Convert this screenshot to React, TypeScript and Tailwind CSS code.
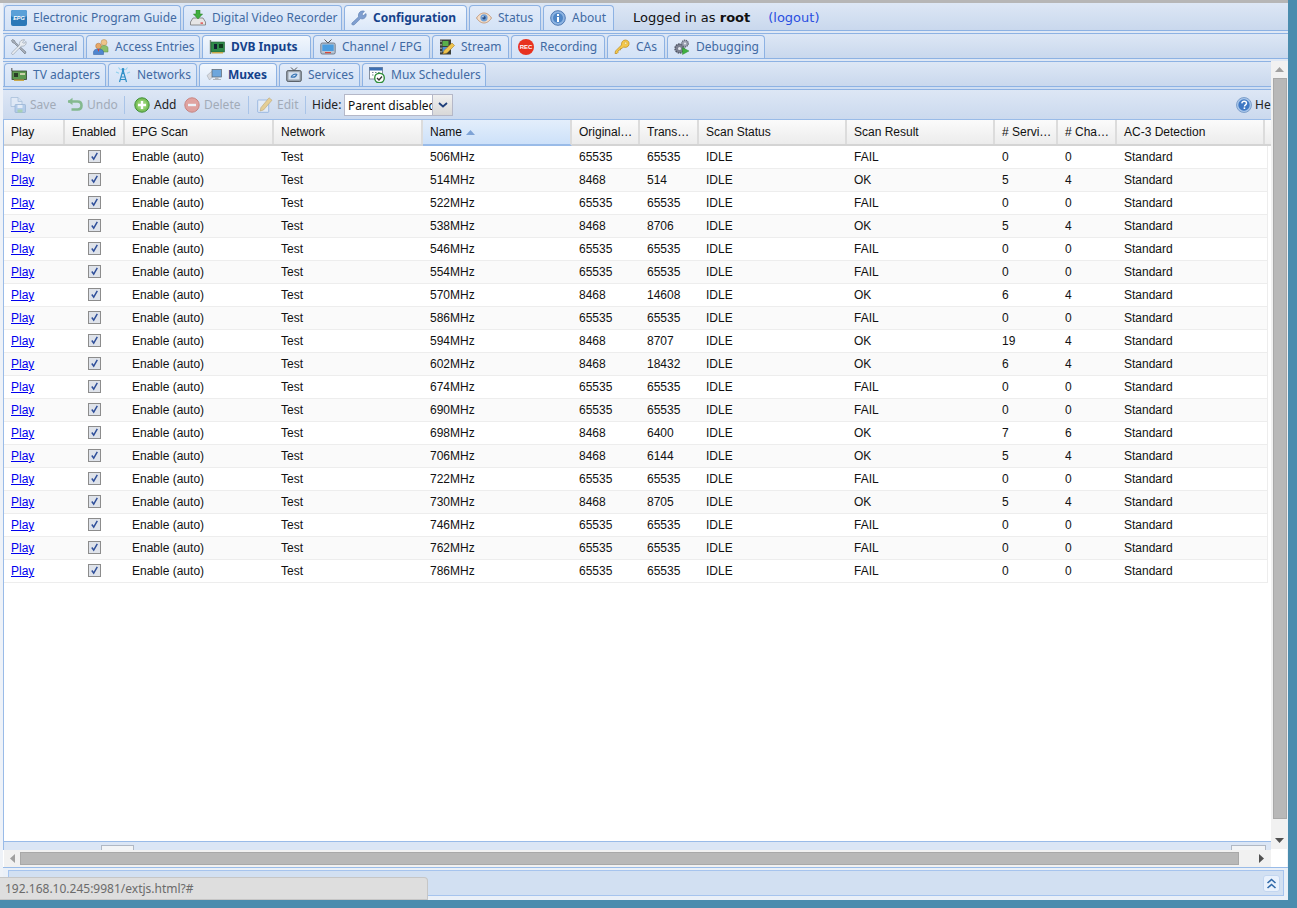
import React from "react";

const ui = "font-['Noto_Sans','DejaVu_Sans',sans-serif]";
const cellFont = "font-['Liberation_Sans',Arial,sans-serif]";

type P = { className?: string };
const S = ({ children, className }: { children: React.ReactNode; className?: string }) => (
  <svg viewBox="0 0 16 16" width="16" height="16" className={"shrink-0 " + (className || "")}>{children}</svg>
);

const IconEpg = () => (
  <S>
    <rect x="0" y="0" width="16" height="16" rx="2" fill="#2a78b8" />
    <rect x="0" y="0" width="16" height="7" rx="2" fill="#5aa0d8" />
    <text x="8" y="9.5" fontSize="5.5" fontWeight="700" fontStyle="italic" fill="#fff" textAnchor="middle" fontFamily="Liberation Sans">EPG</text>
  </S>
);
const IconDvr = () => (
  <S>
    <path d="M3 8h10l2.5 4v3H.5v-3z" fill="#e6e6e6" stroke="#777" strokeWidth=".8" />
    <rect x="10.5" y="12.5" width="2.5" height="1.2" fill="#d33" />
    <path d="M6 0h4v4h2.6L8 9 3.4 4H6z" fill="#3fae3f" stroke="#2a7d2a" strokeWidth=".5" />
  </S>
);
const IconWrench = () => (
  <S>
    <path d="M2 15c-1 0-1.6-1-1-2l6.6-6.2C7 4.500 8 1.500 11 1c1-.2 2 0 2.400.3L11 4l1.200 1.700L15 3.500c.6 2-.2 4-2 5-1.200.6-2.400.5-3.400.1L3.500 14.500c-.4.400-1 .5-1.500.5z" fill="#7f9fd0" stroke="#5c7db0" strokeWidth=".6" />
  </S>
);
const IconEye = () => (
  <S>
    <path d="M.5 8C3 4 6 3 8 3s5 1 7.500 5C13 12 10 13 8 13S3 12 .5 8z" fill="#f3ddc8" stroke="#b98a68" strokeWidth=".8" />
    <circle cx="8" cy="7.800" r="3.600" fill="#6f9fd6" />
    <circle cx="8" cy="7.800" r="1.700" fill="#2b4f85" />
    <circle cx="7" cy="6.800" r=".7" fill="#fff" />
  </S>
);
const IconInfo = () => (
  <S>
    <circle cx="8" cy="8" r="7.300" fill="#8db4e2" stroke="#4f79b3" />
    <circle cx="8" cy="8" r="5" fill="#4f86c6" />
    <rect x="7" y="7" width="2" height="5" fill="#fff" />
    <rect x="7" y="4" width="2" height="2" fill="#fff" />
  </S>
);
const IconGeneral = () => (
  <S>
    <path d="M14 15 3.500 4.500 1.500 3.500.5 1.500 1.500.5l2 1 1 2L15 13z" fill="#a8b0bb" stroke="#666f7a" strokeWidth=".6" />
    <path d="M1.500 15.500c-.8-.3-1.200-1-.8-1.800L8.500 6C8 4 9 1.200 12 .8c.8-.1 1.300 0 1.700.2L11.500 3l1.300 1.500 2.200-2c.4 1.500.1 3-1.300 4-1.100.8-2.300.8-3.200.5l-7.800 8c-.3.400-.4.600-1 .5z" fill="#e8ecf1" stroke="#8995a3" strokeWidth=".6" />
  </S>
);
const IconUsers = () => (
  <S>
    <circle cx="11" cy="3.500" r="3" fill="#eec48a" stroke="#b48a50" strokeWidth=".5" />
    <path d="M7 13V9c0-1.500 1.500-2.500 4-2.500s4 1 4 2.500v4z" fill="#8cc06b" stroke="#5e8f42" strokeWidth=".5" />
    <circle cx="5.500" cy="7" r="2.800" fill="#e8a867" stroke="#a8703a" strokeWidth=".5" />
    <path d="M.5 15.500V13c0-1.800 2-3 5-3s5 1.200 5 3v2.500z" fill="#4f86d0" stroke="#2f5a98" strokeWidth=".5" />
    <path d="M4.500 10h2l-1 3z" fill="#e03c2c" />
  </S>
);
const IconCard = ({ className }: P) => (
  <S className={className}>
    <path d="M1.500 1v14" stroke="#7a8a7a" strokeWidth="1.400" />
    <rect x="2" y="3" width="13.500" height="10" fill="#2e8a4a" stroke="#1e5c30" strokeWidth=".6" />
    <rect x="5" y="5" width="3" height="5" fill="#123" />
    <rect x="10" y="5" width="4" height="4" fill="#0e3a1e" />
    <path d="M3 13h11v1.500H3z" fill="#c9a94a" />
  </S>
);
const IconTv = () => (
  <S>
    <path d="M4.500.5 8 4l3.500-3.500" stroke="#555" strokeWidth="1" fill="none" />
    <rect x=".8" y="4" width="14.400" height="11" rx="1.500" fill="#b8c4d2" stroke="#5a6a7c" strokeWidth=".8" />
    <rect x="2.300" y="5.500" width="11.400" height="6.500" fill="#4a9de0" />
    <rect x="5" y="13" width="6" height="1.200" fill="#d9483a" />
  </S>
);
const IconStream = () => (
  <S>
    <rect x="1" y="0.500" width="11" height="15" fill="#3b3f3a" />
    <rect x="3.500" y="2" width="6" height="5" fill="#59b04a" />
    <rect x="3.500" y="8" width="6" height="5" fill="#4a90d8" />
    <path d="M1.500 1.500h1v1.500h-1zM1.500 5h1v1.500h-1zM1.500 8.500h1V10h-1zM1.500 12h1v1.500h-1z" fill="#ddd" />
    <path d="M4 15l1-3.500L13 4l2.500 2.500L8 14z" fill="#eec34d" stroke="#a7802a" strokeWidth=".6" />
  </S>
);
const IconRec = () => (
  <S>
    <circle cx="8" cy="8" r="8" fill="#e8321f" />
    <text x="8" y="10" fontSize="6" fontWeight="700" fill="#fff" textAnchor="middle" fontFamily="Liberation Sans">REC</text>
  </S>
);
const IconKey = () => (
  <S>
    <path d="M1 14.500 1.500 12 7.500 6C7 3.500 9 .8 11.500 1s4 2 3.500 4.500-3.300 3.500-5.500 2.500l-1.500 1.500H6.500V11H5l-1 1v1.500l-1 1z" fill="#f5c84a" stroke="#b98a20" strokeWidth=".7" />
    <circle cx="11.700" cy="4.200" r="1.200" fill="#fff1b8" stroke="#b98a20" strokeWidth=".4" />
  </S>
);
const IconGears = () => (
  <S>
    <circle cx="5.500" cy="9.500" r="4.500" fill="#7b8090" stroke="#4f5463" strokeWidth="1.400" strokeDasharray="1.600 .8" />
    <circle cx="5.500" cy="9.500" r="1.500" fill="#e3e6ee" />
    <circle cx="11" cy="4.500" r="3.300" fill="#9da2b2" stroke="#5f6475" strokeWidth="1.200" strokeDasharray="1.300 .7" />
    <circle cx="11" cy="4.500" r="1.100" fill="#e3e6ee" />
    <path d="M8.500 8.500v7l6.500-3.500z" fill="#3fb13f" stroke="#247a24" strokeWidth=".4" />
  </S>
);
const IconAdapter = () => (
  <S>
    <path d="M.8 1v3" stroke="#666" strokeWidth="1.200" />
    <rect x="1" y="4" width="14.500" height="8.500" fill="#5c9a50" stroke="#33452f" strokeWidth=".8" />
    <rect x="3" y="6" width="4" height="4" fill="#2a3d28" />
    <rect x="9" y="6" width="5" height="2" fill="#c9d2a8" />
    <path d="M3 12.500h10V14H3z" fill="#c9a94a" />
  </S>
);
const IconTower = () => (
  <S>
    <path d="M8 3 4.500 15M8 3l3.500 12M6 10h4M5.300 12.500h5.400M7 6.500h2" stroke="#2f8fc7" strokeWidth="1.200" fill="none" />
    <circle cx="8" cy="2.500" r="1.400" fill="#2f8fc7" />
    <path d="M3.500.5 5.500 3M12.500.5 10.500 3M1 5l3 1.200M15 5l-3 1.200" stroke="#8fd0ee" strokeWidth="1.100" />
  </S>
);
const IconMux = () => (
  <S>
    <path d="M1 8.500 5.500 4.500 8 8.500 3.500 13z" fill="#d8dadf" stroke="#9ba0a8" strokeWidth=".5" />
    <rect x="6" y="2.500" width="9.500" height="7.500" fill="#6ea6dc" stroke="#5c6670" strokeWidth=".7" />
    <path d="M9 10h3.500v2H15v1H7v-1h2z" fill="#b0b5bc" />
  </S>
);
const IconServices = () => (
  <S>
    <path d="M5 .5 8 3.500 11 .5" stroke="#444" strokeWidth=".9" fill="none" />
    <rect x=".7" y="3.500" width="14.600" height="11" rx="1.500" fill="#9aa3ac" stroke="#444a50" strokeWidth=".8" />
    <rect x="2.500" y="5.200" width="11" height="7.300" fill="#d6e2f0" />
    <path d="M5 10.500c1-3 4-4 6-3M11 7c-1 3-3.500 3.500-5.500 3" stroke="#3b77b5" strokeWidth="1.200" fill="none" />
  </S>
);
const IconCal = () => (
  <S>
    <rect x=".5" y=".5" width="13" height="11.500" fill="#fff" stroke="#6b7888" strokeWidth=".8" />
    <rect x=".5" y=".5" width="13" height="3" fill="#3d6fb3" />
    <path d="M3 5.500h1.500M6 5.500h1.500M9 5.500h1.500M3 8h1.500M6 8h1.500" stroke="#7a8694" strokeWidth="1.200" />
    <circle cx="10.500" cy="11" r="4.800" fill="#fff" stroke="#2f8f3a" strokeWidth="1.400" />
    <path d="M8 11l2 2 3-3.500" stroke="#333" strokeWidth="1.300" fill="none" />
  </S>
);
const IconSave = () => (
  <S className="opacity-60">
    <path d="M1 .5h7l4 4v5H1z" fill="#e6eef8" stroke="#8aa8cc" strokeWidth=".8" />
    <path d="M8 .5v4h4" fill="#cfdff2" stroke="#8aa8cc" strokeWidth=".8" />
    <rect x="5" y="7.500" width="10.500" height="8" rx=".8" fill="#9fc0e6" stroke="#6f93bf" strokeWidth=".7" />
    <rect x="7.500" y="8" width="5" height="3" fill="#eef4fb" />
    <rect x="7.500" y="12.500" width="5" height="3" fill="#8ec78e" />
  </S>
);
const IconUndo = () => (
  <S className="opacity-60">
    <path d="M1 4.500h9.500c2.500 0 4 1.500 4 4s-1.500 4-4 4H4.500" stroke="#4fa04f" strokeWidth="2.600" fill="none" />
    <path d="M5.500.8V8L.8 4.500z" fill="#4fa04f" />
  </S>
);
const IconAdd = () => (
  <S>
    <circle cx="8" cy="8" r="7.200" fill="#7cc05a" stroke="#3f8f35" />
    <circle cx="8" cy="8" r="5" fill="#92d072" />
    <path d="M6.800 4h2.400v2.800H12v2.400H9.200V12H6.800V9.200H4V6.800h2.800z" fill="#fff" />
  </S>
);
const IconDel = () => (
  <S className="opacity-60">
    <circle cx="8" cy="8" r="7.200" fill="#e87a6a" stroke="#c04a3a" />
    <rect x="4" y="6.800" width="8" height="2.400" fill="#fff" />
  </S>
);
const IconEdit = () => (
  <S className="opacity-60">
    <rect x=".7" y="3" width="11" height="12.300" rx=".6" fill="#eef4fb" stroke="#5f8fd0" strokeWidth=".8" />
    <path d="M3 14l1-3.500L12 .8l3 2.400L6.500 13z" fill="#f0c45a" stroke="#a9812c" strokeWidth=".6" />
  </S>
);
const IconHelp = () => (
  <S>
    <circle cx="8" cy="8" r="7.500" fill="#a9c7ea" stroke="#6f93c3" strokeWidth=".8" />
    <circle cx="8" cy="8" r="5.700" fill="#3f78c4" />
    <path d="M5.800 6.300C6 4.800 7 4.200 8.200 4.200c1.400 0 2.300.8 2.300 2 0 1.700-2 1.700-2 3.300" stroke="#fff" strokeWidth="1.400" fill="none" />
    <rect x="7.600" y="10.400" width="1.600" height="1.600" fill="#fff" />
  </S>
);
const Check = () => (
  <div className="w-[13px] h-[13px] border border-[#8c8c8c] bg-[#dfe3ea] flex items-center justify-center">
    <svg viewBox="0 0 11 11" width="11" height="11">
      <path d="M2.800 5.500l1.900 2.600L8.300 1.800" stroke="#2f4f9a" strokeWidth="1.500" fill="none" />
    </svg>
  </div>
);

const Tab = ({ icon, label, w, active }: { icon: React.ReactNode; label: string; w: string; active?: boolean }) => (
  <div
    className={
      `${w} shrink-0 h-full flex items-center gap-[6px] pl-[6px] rounded-t-[4px] border border-[#8db2e3] ${ui} text-[12px] whitespace-nowrap ` +
      (active
        ? "border-b-0 -mb-px pb-px bg-linear-to-b from-[#f2f7fd] to-[#dbe8f9] font-bold text-[#15428b]"
        : "border-b-0 bg-linear-to-b from-[#e2ebf9] to-[#d3e2f6] text-[#416aa3]")
    }
  >
    {icon}
    <span>{label}</span>
  </div>
);

const Strip = ({ children, pt, h }: { children: React.ReactNode; pt: string; h: string }) => (
  <div className={`${h} ${pt} pl-[1px] flex gap-[2px] border-b border-[#8db2e3] bg-linear-to-b from-[#dde7f5] to-[#c9d8ed] items-stretch`}>
    {children}
  </div>
);

const cols = [
  ["Play", ""],
  ["Enabled", ""],
  ["EPG Scan", ""],
  ["Network", ""],
  ["Name", "sort"],
  ["Original…", ""],
  ["Trans…", ""],
  ["Scan Status", ""],
  ["Scan Result", ""],
  ["# Servi…", ""],
  ["# Cha…", ""],
  ["AC-3 Detection", ""],
];

const rows: [string, string, string, string, string, string][] = [
  ["506MHz", "65535", "65535", "FAIL", "0", "0"],
  ["514MHz", "8468", "514", "OK", "5", "4"],
  ["522MHz", "65535", "65535", "FAIL", "0", "0"],
  ["538MHz", "8468", "8706", "OK", "5", "4"],
  ["546MHz", "65535", "65535", "FAIL", "0", "0"],
  ["554MHz", "65535", "65535", "FAIL", "0", "0"],
  ["570MHz", "8468", "14608", "OK", "6", "4"],
  ["586MHz", "65535", "65535", "FAIL", "0", "0"],
  ["594MHz", "8468", "8707", "OK", "19", "4"],
  ["602MHz", "8468", "18432", "OK", "6", "4"],
  ["674MHz", "65535", "65535", "FAIL", "0", "0"],
  ["690MHz", "65535", "65535", "FAIL", "0", "0"],
  ["698MHz", "8468", "6400", "OK", "7", "6"],
  ["706MHz", "8468", "6144", "OK", "5", "4"],
  ["722MHz", "65535", "65535", "FAIL", "0", "0"],
  ["730MHz", "8468", "8705", "OK", "5", "4"],
  ["746MHz", "65535", "65535", "FAIL", "0", "0"],
  ["762MHz", "65535", "65535", "FAIL", "0", "0"],
  ["786MHz", "65535", "65535", "FAIL", "0", "0"],
];

const gridCols = "grid grid-cols-[61px_60px_149px_149px_149px_68px_59px_148px_148px_63px_59px_148px]";

const Sep = () => <div className="w-px h-[18px] bg-[#a9c4e8] shrink-0" />;
const TbBtn = ({ icon, label, disabled, w }: { icon: React.ReactNode; label: string; disabled?: boolean; w: string }) => (
  <div className={`${w} shrink-0 flex items-center gap-[4px] ${ui} text-[12px] ${disabled ? "text-[#a2abb8]" : "text-[#222]"}`}>
    {icon}
    <span>{label}</span>
  </div>
);

export default function App() {
  return (
    <div className="w-[1297px] h-[908px] bg-[#4a8cae] overflow-hidden relative">
      <div className="w-[1288px] h-[900px] bg-[#eef2f8] border-t-[3px] border-[#b6b6b6] pl-[3px] flex flex-col">
        {/* top level tabs */}
        <Strip h="h-[28px]" pt="pt-[2px]">
          <Tab w="w-[177px]" icon={<IconEpg />} label="Electronic Program Guide" />
          <Tab w="w-[159px]" icon={<IconDvr />} label="Digital Video Recorder" />
          <Tab w="w-[123px]" icon={<IconWrench />} label="Configuration" active />
          <Tab w="w-[72px]" icon={<IconEye />} label="Status" />
          <Tab w="w-[71px]" icon={<IconInfo />} label="About" />
          <div className="ml-[17px] flex items-center gap-[18px] font-['DejaVu_Sans',sans-serif] text-[13px] text-[#111] whitespace-nowrap">
            <span>Logged in as <b>root</b></span>
            <span className="text-[#2a4fe0]">(logout)</span>
          </div>
        </Strip>
        <div className="h-[2px] bg-[#dfe8f5]" />
        <div className="h-px bg-[#8db2e3]" />
        <Strip h="h-[25px]" pt="pt-[1px]">
          <Tab w="w-[80px]" icon={<IconGeneral />} label="General" />
          <Tab w="w-[114px]" icon={<IconUsers />} label="Access Entries" />
          <Tab w="w-[109px]" icon={<IconCard />} label="DVB Inputs" active />
          <Tab w="w-[117px]" icon={<IconTv />} label="Channel / EPG" />
          <Tab w="w-[77px]" icon={<IconStream />} label="Stream" />
          <Tab w="w-[94px]" icon={<IconRec />} label="Recording" />
          <Tab w="w-[58px]" icon={<IconKey />} label="CAs" />
          <Tab w="w-[98px]" icon={<IconGears />} label="Debugging" />
        </Strip>
        <div className="h-[2px] bg-[#dfe8f5]" />

        <div className="flex flex-1 min-h-0">
          {/* main column */}
          <div className="w-[1268px] flex flex-col min-h-0">
            <div className="h-px bg-[#8db2e3]" />
            <Strip h="h-[25px]" pt="pt-[1px]">
              <Tab w="w-[102px]" icon={<IconAdapter />} label="TV adapters" />
              <Tab w="w-[89px]" icon={<IconTower />} label="Networks" />
              <Tab w="w-[78px]" icon={<IconMux />} label="Muxes" active />
              <Tab w="w-[81px]" icon={<IconServices />} label="Services" />
              <Tab w="w-[124px]" icon={<IconCal />} label="Mux Schedulers" />
            </Strip>
            <div className="h-[2px] bg-[#cfdef2]" />
            <div className="h-px bg-[#8db2e3]" />
            {/* toolbar */}
            <div className="h-[30px] shrink-0 border-b border-[#99bbe8] bg-linear-to-b from-[#dde7f5] to-[#cbd9ee] flex items-center pl-[7px] overflow-hidden">
              <TbBtn w="w-[57px]" icon={<IconSave />} label="Save" disabled />
              <TbBtn w="w-[57px]" icon={<IconUndo />} label="Undo" disabled />
              <Sep />
              <div className="w-[9px] shrink-0" />
              <TbBtn w="w-[50px]" icon={<IconAdd />} label="Add" />
              <TbBtn w="w-[64px]" icon={<IconDel />} label="Delete" disabled />
              <Sep />
              <div className="w-[8px] shrink-0" />
              <TbBtn w="w-[48px]" icon={<IconEdit />} label="Edit" disabled />
              <Sep />
              <span className={`ml-[6px] w-[32px] shrink-0 ${ui} text-[12px] text-[#222]`}>Hide:</span>
              <div className="w-[109px] h-[22px] shrink-0 flex border border-[#b5b8c8] bg-white">
                <div className={`w-[87px] shrink-0 overflow-hidden whitespace-nowrap pl-[3px] ${ui} text-[12px] leading-[21px] text-[#111]`}>Parent disabled</div>
                <div className="flex-1 bg-linear-to-b from-[#f0f0f0] to-[#d8d8d8] border-l border-[#b5b8c8] flex items-center justify-center">
                  <svg viewBox="0 0 10 6" width="10" height="6">
                    <path d="M1 1l4 3.500L9 1" stroke="#1f3f7a" strokeWidth="1.800" fill="none" />
                  </svg>
                </div>
              </div>
              <div className="flex-1" />
              <div className={`w-[35px] shrink-0 flex items-center gap-[3px] overflow-hidden ${ui} text-[12px] text-[#222]`}>
                <IconHelp />
                <span>Help</span>
              </div>
            </div>
            {/* grid */}
            <div className="flex-1 min-h-0 bg-white overflow-hidden border-l border-[#99bbe8]">
              <div className={`h-[26px] bg-linear-to-b from-[#fbfbfb] to-[#ececec] border-b-2 border-[#d4d4d4] ${gridCols}`}>
                {cols.map(([c, s]) => (
                  <div
                    key={c}
                    className={`${cellFont} text-[12px] text-[#111] pl-[7px] leading-[24px] whitespace-nowrap border-r-2 border-[#dcdcdc] ${s ? "bg-linear-to-b from-[#e3eefb] to-[#cde1f9] border-b-2 border-b-[#99bbe8] -mb-[2px] flex items-center gap-[4px]" : ""}`}
                  >
                    {c}
                    {s && (
                      <svg viewBox="0 0 9 5" width="9" height="5">
                        <path d="M4.500 0 9 5H0z" fill="#7ea3d6" />
                      </svg>
                    )}
                  </div>
                ))}
              </div>
              {rows.map((r, i) => (
                <div
                  key={r[0]}
                  className={`h-[23px] w-[1264px] border-b border-r border-[#ededed] ${i % 2 ? "bg-[#fafafa]" : "bg-white"} ${cellFont} text-[12px] text-[#111] leading-[22px] ${gridCols}`}
                >
                  <a className="pl-[7px] text-[#0000ee] underline">Play</a>
                  <div className="flex items-center justify-center pb-px pr-[1px]"><Check /></div>
                  <div className="pl-[7px]">Enable (auto)</div>
                  <div className="pl-[7px]">Test</div>
                  <div className="pl-[7px]">{r[0]}</div>
                  <div className="pl-[7px]">{r[1]}</div>
                  <div className="pl-[7px]">{r[2]}</div>
                  <div className="pl-[7px]">IDLE</div>
                  <div className="pl-[7px]">{r[3]}</div>
                  <div className="pl-[7px]">{r[4]}</div>
                  <div className="pl-[7px]">{r[5]}</div>
                  <div className="pl-[7px] whitespace-nowrap">Standard</div>
                </div>
              ))}
            </div>
            {/* hidden tab strip under the grid */}
            <div className="h-[9px] shrink-0 border-t border-[#99bbe8] bg-[#dbe6f5] border-l flex items-end">
              <div className="ml-[97px] w-[33px] h-[5px] border border-b-0 border-[#b0b8c4] bg-[#f2f4f6]" />
              <div className="ml-[1097px] w-[35px] h-[5px] border border-b-0 border-[#b0b8c4] bg-[#f2f4f6]" />
            </div>
            {/* horizontal scrollbar */}
            <div className="h-[17px] shrink-0 bg-[#f1f1f1] border-l border-white flex items-center">
              <div className="w-[16px] flex items-center justify-center shrink-0">
                <svg viewBox="0 0 5 9" width="5" height="9"><path d="M5 0v9L0 4.500z" fill="#a0a0a0" /></svg>
              </div>
              <div className="w-[1219px] h-[13px] shrink-0 bg-[#b8b8b8] border border-[#a8a8a8]" />
              <div className="flex-1 flex items-center justify-center pl-[12px]">
                <svg viewBox="0 0 5 9" width="5" height="9"><path d="M0 0v9l5-4.500z" fill="#505050" /></svg>
              </div>
            </div>
          </div>
          {/* vertical scrollbar column */}
          <div className="w-[16px] shrink-0 flex flex-col">
            <div className="h-[788px] bg-[#f1f1f1] flex flex-col items-end">
              <div className="h-[17px] w-full flex items-center justify-center">
                <svg viewBox="0 0 9 5" width="9" height="5"><path d="M4.500 0 9 5H0z" fill="#a0a0a0" /></svg>
              </div>
              <div className="w-[14px] h-[741px] bg-[#b8b8b8] border border-[#a8a8a8]" />
              <div className="flex-1 w-full flex items-center justify-center pt-[12px]">
                <svg viewBox="0 0 9 5" width="9" height="5"><path d="M0 0h9L4.500 5z" fill="#505050" /></svg>
              </div>
            </div>
            <div className="flex-1 bg-white" />
          </div>
        </div>

        {/* bottom panel */}
        <div className="h-[33px] shrink-0 border-t border-[#99bbe8] bg-[#eaf0f8] pt-[2px] pb-[4px] pl-[5px] pr-[4px]">
          <div className="h-full border border-[#a6c4ee] bg-[#d2e0f2] flex items-center justify-end pr-[3px]">
            <div className="w-[17px] h-[17px] rounded-[3px] border border-[#c3d6f0] bg-[#e9f1fc] flex items-center justify-center">
              <svg viewBox="0 0 11 11" width="11" height="11">
                <path d="M1.500 5 5.500 1.500 9.500 5M1.500 10 5.500 6.500 9.500 10" stroke="#2f68a8" strokeWidth="1.600" fill="none" />
              </svg>
            </div>
          </div>
        </div>
      </div>

      {/* browser link-status bubble */}
      <div className="absolute left-0 top-[877px] w-[428px] h-[23px] bg-[#dedede] border border-l-0 border-[#c6c6c6] rounded-tr-[4px] pl-[5px] font-['Noto_Sans',sans-serif] text-[12px] leading-[21px] text-[#6b6b6b] whitespace-nowrap">
        192.168.10.245:9981/extjs.html?#
      </div>
    </div>
  );
}
